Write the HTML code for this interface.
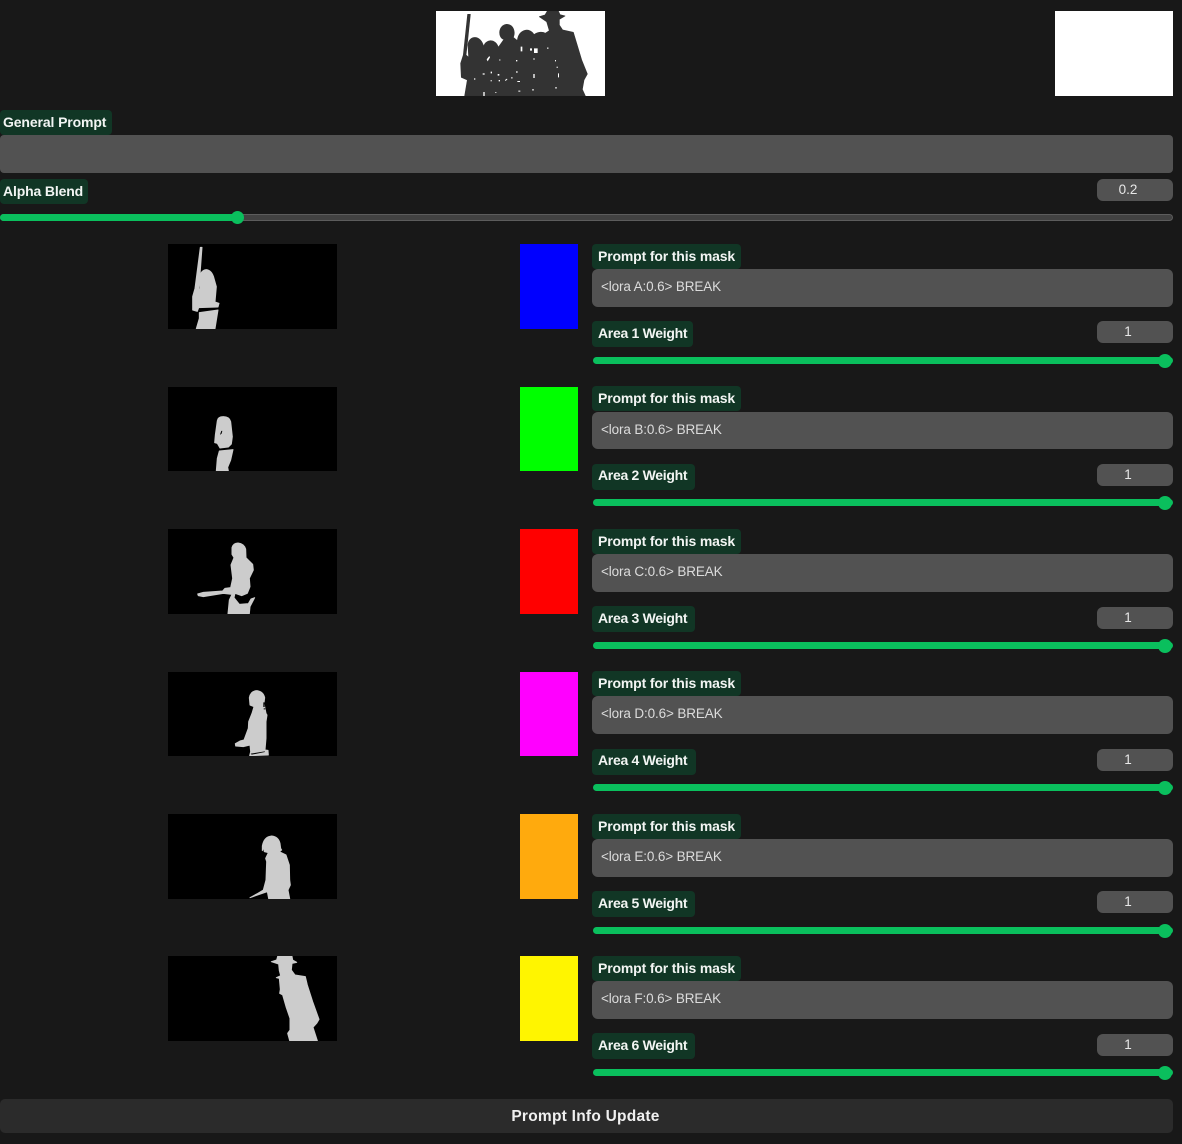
<!DOCTYPE html>
<html><head><meta charset="utf-8"><style>
html,body{margin:0;padding:0;background:#181818}
body{width:1182px;height:1144px;position:relative;overflow:hidden;font-family:"Liberation Sans",sans-serif;color:#fff}
.a{position:absolute}
svg{display:block;position:absolute}
.s{fill:#ccc;stroke:#ccc;stroke-width:3;stroke-linejoin:round}
.l{position:absolute;background:#113625;border-radius:4px;font-weight:700;font-size:14px;color:#f2f5f3;white-space:nowrap;box-sizing:border-box}
.pl{left:592px;top:0;width:149px;height:25px;line-height:25px;padding-left:6px;letter-spacing:-.15px}
.al{left:592px;top:77px;height:26px;line-height:25px;padding-left:6px;letter-spacing:-.3px}
.in{position:absolute;left:592px;top:25px;width:581px;height:38px;background:#525252;border-radius:6px;box-sizing:border-box;padding-left:9px;line-height:35px;font-size:13.5px;color:#dcdcdc;letter-spacing:-.13px}
.n{position:absolute;background:#525252;border-radius:6px;left:1097px;top:77px;width:76px;height:22px;text-align:center;line-height:21px;font-size:13.5px;color:#e8e8e8;box-sizing:border-box;padding-right:14px}
.tr{position:absolute;left:593px;top:113px;width:580px;height:7px;border-radius:4px;background:#0abf5d}
.th{position:absolute;left:1158px;top:110px;width:14px;height:14px;border-radius:50%;background:#0abf5d}
.r{position:absolute;left:0;width:1182px;height:130px}
.m{left:168px;top:0;background:#000}
.c{position:absolute;left:520px;top:0;width:58px;height:85px}
</style></head><body>

<svg style="left:436px;top:11px" width="169" height="85" viewBox="18 33 507 255">
<rect x="18" y="33" width="507" height="255" fill="#fff"/>
<path fill="#333" stroke="#333" stroke-width="2" stroke-linejoin="round" d="M113 43H121L112 130L108 165L116 172L114 135C116 106 152 102 161 140C166 118 196 114 205 142L222 118C204 115 203 76 230 73C250 73 257 95 250 112L262 122C266 86 300 82 312 104C325 94 340 96 346 100L358 92L350 65L328 50L345 45L352 33H385L390 44L405 48L388 58L388 75L398 90L430 97L440 130L455 180L472 222L462 240L457 268L466 288H104L112 240L94 232L92 190L100 165Z"/>
<g fill="#fff"><path d="M272 140h5v14h-5zM300 145h6v7h-6zM312 145h11v14h-11zM160 276h4v12h-4zM310 222h4v12h-4zM384 220h3v12h-3z"/>
<path d="M170 178l8-10 2 4-7 12zM158 220h6v4h-6zM182 215h4v5h-4zM203 222h5v5h-5zM225 240l6-4 1 3-6 4zM243 232h5v3h-5zM258 214h5v4h-5zM262 243h8v3h-8zM208 178h3v4h-3zM258 180h4v4h-4zM182 240h3v4h-3zM206 240h4v4h-4zM132 235h4v4h-4zM265 272h6v3h-6zM306 268h6v3h-6zM196 276h3v3h-3zM375 262h6v3h-6zM380 200h3v4h-3zM375 180h3v4h-3zM352 142h3v5h-3zM310 175h4v4h-4z"/></g>
</svg>
<div class="a" style="left:1055px;top:11px;width:118px;height:85px;background:#fff"></div>

<div class="l" style="left:0;top:110px;width:112px;height:25px;line-height:25px;padding-left:3px;letter-spacing:-.12px">General Prompt</div>
<div class="a" style="left:0;top:135px;width:1173px;height:38px;background:#525252;border-radius:4px"></div>
<div class="l" style="left:0;top:179px;width:88px;height:25px;line-height:25px;padding-left:3px;letter-spacing:-.15px">Alpha Blend</div>
<div class="n" style="top:179px;height:22px">0.2</div>
<div class="a" style="left:0;top:214px;width:1173px;height:7px;border-radius:4px;background:#414141;border:1px solid #5c5c5c;box-sizing:border-box"></div>
<div class="a" style="left:0;top:214px;width:237px;height:7px;border-radius:4px;background:#0abf5d"></div>
<div class="a" style="left:230.5px;top:211px;width:13px;height:13px;border-radius:50%;background:#0abf5d"></div>

<div class="r" style="top:244px">
<svg class="m" width="169" height="85" viewBox="24 12 507 255"><path class="s" d="M121 22H126L117 145L121 152L120 108Q124 90 140 89Q156 92 162 115L169 140L165 186L177 190L174 201L116 203L112 214L98 210L98 170L105 145ZM118 218L174 210L165 266H109L118 235Z"/></svg>
<div class="c" style="background:#0000ff"></div>
<div class="l pl">Prompt for this mask</div><div class="in">&lt;lora A:0.6&gt; BREAK</div>
<div class="l al" style="width:101px">Area 1 Weight</div><div class="n">1</div><div class="tr"></div><div class="th"></div>
</div>

<div class="r" style="top:387px;margin-top:-1px">
<svg class="m" style="top:1px" width="169" height="84" viewBox="24 441 507 252"><path class="s" fill-rule="evenodd" d="M172 542Q174 530 190 530Q208 530 212 545L217 590L214 612L205 621L180 624L172 610L164 608L166 585ZM183 571L177 588L186 582L189 571ZM178 633L219 629L212 660L203 682L205 692H169L172 655Z"/></svg>
<div class="c" style="top:1px;height:84px;background:#00ff00"></div>
<div class="l pl">Prompt for this mask</div><div class="in" style="height:37px;top:25px;margin-top:1px">&lt;lora B:0.6&gt; BREAK</div>
<div class="l al" style="width:103px;top:78px;line-height:23px">Area 2 Weight</div><div class="n" style="top:78px">1</div><div class="tr" style="top:113px"></div><div class="th" style="top:110px"></div>
</div>

<div class="r" style="top:529px">
<svg class="m" width="169" height="85" viewBox="24 12 507 255"><path class="s" d="M216 68Q220 54 234 54Q252 56 257 72L258 98L278 118L280 135L268 160L270 185L262 205L245 212L225 205L222 218L238 238L265 236L273 222L284 218L270 245L268 266H204L208 225L216 208L190 205L130 215L115 212L113 207L130 202L188 198L195 190L212 188L218 160L213 120L222 98L216 88Z"/></svg>
<div class="c" style="background:#ff0000"></div>
<div class="l pl">Prompt for this mask</div><div class="in">&lt;lora C:0.6&gt; BREAK</div>
<div class="l al" style="width:103px">Area 3 Weight</div><div class="n" style="top:78px">1</div><div class="tr"></div><div class="th"></div>
</div>

<div class="r" style="top:672px;margin-top:-1px">
<svg class="m" style="top:1px" width="169" height="84" viewBox="24 441 507 252"><path class="s" d="M268 518Q272 497 291 497Q310 500 314 518L312 535L318 565L321 570L318 590L318 640L315 675L324 676L325 690L269 692L272 680L270 660L250 665L227 663L226 656L240 648L252 645L265 610L266 590L276 565L282 545L270 540Z"/><path fill="#000" d="M310 532h4v14h-4zM311 550h5v3h-5zM272 686l42-7 1 2-40 8z"/></svg>
<div class="c" style="top:1px;height:84px;background:#ff00ff"></div>
<div class="l pl">Prompt for this mask</div><div class="in" style="margin-top:0">&lt;lora D:0.6&gt; BREAK</div>
<div class="l al" style="width:104px;top:78px;line-height:23px">Area 4 Weight</div><div class="n" style="top:78px">1</div><div class="tr"></div><div class="th"></div>
</div>

<div class="r" style="top:814px">
<svg class="m" width="169" height="85" viewBox="24 12 507 255"><path class="s" d="M307 108Q312 80 335 78Q355 80 360 100L362 115L365 120L358 125L378 135L388 165L389 210L391 225L384 240L389 266H326L322 245L270 263L290 252L310 240L318 210L320 155L317 145L325 128L313 125L310 112L307 122Z"/></svg>
<div class="c" style="background:#ffaa0d"></div>
<div class="l pl">Prompt for this mask</div><div class="in">&lt;lora E:0.6&gt; BREAK</div>
<div class="l al" style="width:103px">Area 5 Weight</div><div class="n" style="top:77px">1</div><div class="tr"></div><div class="th"></div>
</div>

<div class="r" style="top:956px">
<svg class="m" width="169" height="85" viewBox="24 438 507 255"><path class="s" d="M353 439H396L398 450L410 457L396 460L394 480L405 495L436 500L442 525L458 575L477 628L470 640L459 652L472 692H389L383 670L390 660L390 625L378 590L368 555L359 550L361 538L358 505L349 503L362 497L358 482L356 462L334 455L350 450Z"/></svg>
<div class="c" style="background:#fff500"></div>
<div class="l pl">Prompt for this mask</div><div class="in">&lt;lora F:0.6&gt; BREAK</div>
<div class="l al" style="width:103px">Area 6 Weight</div><div class="n" style="top:78px">1</div><div class="tr"></div><div class="th"></div>
</div>

<div class="a" style="left:0;top:1099px;width:1173px;height:34px;background:#2b2b2b;border-radius:5px;text-align:center;line-height:35px;font-weight:700;font-size:15.5px;color:#f0f0f0;letter-spacing:.25px;box-sizing:border-box;padding-right:2px">Prompt Info Update</div>
</body></html>
